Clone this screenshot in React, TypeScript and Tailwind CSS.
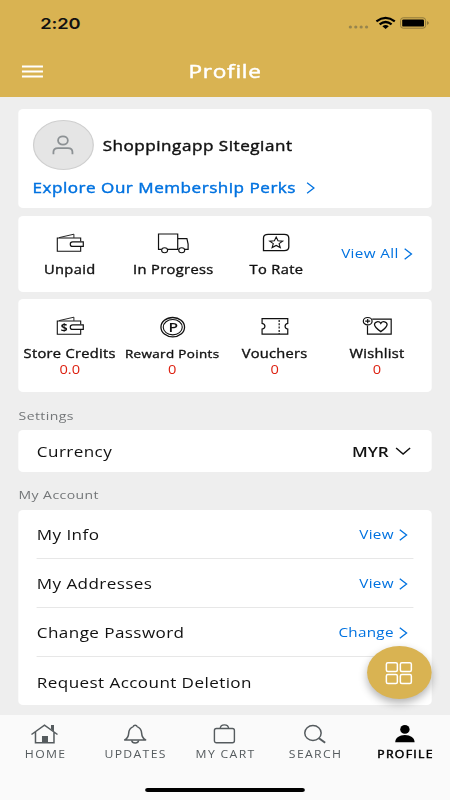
import React from 'react';

// Everything is laid out on a 369px wide canvas and stretched to 450px
const STRETCH = 450 / 369;

interface DrawingProps {
  w: number;
  h: number;
  className?: string;
  children: React.ReactNode;
}

// Icon drawn in final screen units, so it undoes the horizontal stretch
const Drawing = ({ w, h, className = '', children }: DrawingProps) => (
  <svg
    viewBox={`0 0 ${w} ${h}`}
    preserveAspectRatio="none"
    fill="none"
    stroke="currentColor"
    className={`block shrink-0 overflow-visible ${className}`}
    style={{ width: w / STRETCH, height: h }}
  >
    {children}
  </svg>
);

const Chevron = () => (
  <Drawing w={9} h={12}>
    <path d="M1 0.8 7.8 6 1 11.2" strokeWidth="1.3" />
  </Drawing>
);

const Wallet = ({ dollar = false }: { dollar?: boolean }) => (
  <Drawing w={28} h={19}>
    <path d="M24.6 8.3V5H1.2V18.2H24.6V13.5" strokeWidth="1.1" />
    <path d="M3 4.6 17.8 1.2V4.8" strokeWidth="0.9" />
    <path d="M16.5 8.9H27.2V13.4H16.5C13.4 13.4 13.4 8.9 16.5 8.9Z" strokeWidth="1.2" />
    {dollar && (
      <text x="4.6" y="15.2" fontSize="10" fontWeight="700" fill="currentColor" stroke="none" textLength="6.8" lengthAdjust="spacingAndGlyphs">$</text>
    )}
  </Drawing>
);

const Truck = () => (
  <Drawing w={32} h={21}>
    <path d="M4.2 16.3H1.2V1H20.4V16.3H10.4M20.4 5.6H29.6L30.8 11V16.3H27.6M20.4 16.3H21.2" strokeWidth="1.2" />
    <ellipse cx="7.3" cy="17.3" rx="3" ry="2.5" strokeWidth="1.1" />
    <ellipse cx="24.4" cy="17.3" rx="3" ry="2.5" strokeWidth="1.1" />
  </Drawing>
);

const Rate = () => (
  <Drawing w={28} h={19}>
    <path d="M1.3 17.6V5Q1.3 1.4 6 1.4H22Q26.6 1.4 26.6 5V14Q26.6 17.6 22 17.6Z" strokeWidth="1.3" />
    <path d="M14 4 15.8 7.8 20.4 8.1 16.9 10.6 18.1 14.6 14 12.4 9.9 14.6 11.1 10.6 7.6 8.1 12.2 7.8Z" strokeWidth="1.1" />
  </Drawing>
);

const Points = () => (
  <Drawing w={26} h={21}>
    <ellipse cx="13" cy="11.2" rx="11.8" ry="9.7" strokeWidth="1.3" />
    <ellipse cx="13" cy="11.2" rx="9.5" ry="7.7" strokeWidth="1.1" />
    <text x="8.7" y="15.7" fontSize="12.5" fontWeight="600" fill="currentColor" stroke="none" textLength="9.6" lengthAdjust="spacingAndGlyphs">P</text>
  </Drawing>
);

const Voucher = () => (
  <Drawing w={28} h={19}>
    <path d="M1.1 2.6H26.8V7.4C23.2 8.2 23.2 12.2 26.8 13V18.2H1.1V13C4.9 12.2 4.9 8.2 1.1 7.4Z" strokeWidth="1.2" />
    <path d="M18.2 4V18" strokeWidth="1.2" strokeDasharray="2 1.3" />
  </Drawing>
);

const Wishlist = () => (
  <Drawing w={30} h={19}>
    <path d="M10 3.2H29V18.2H5.3V9.5" strokeWidth="1.2" />
    <ellipse cx="5.5" cy="5.2" rx="4.4" ry="3.7" strokeWidth="1.2" />
    <path d="M3 5.2H8M5.5 3.1V7.3" strokeWidth="1.2" />
    <path d="M18.6 15.6C14.5 12.8 12.3 11 12.3 8.6 12.3 5.4 17 4.7 18.6 7.4 20.2 4.7 24.9 5.4 24.9 8.6 24.9 11 22.7 12.8 18.6 15.6Z" strokeWidth="1.3" />
  </Drawing>
);

const orders = [
  { label: 'Unpaid', icon: <Wallet />, width: 'w-[84px]' },
  { label: 'In Progress', icon: <Truck />, width: 'w-[86px]' },
  { label: 'To Rate', icon: <Rate />, width: 'w-[83px]' },
];

const balances = [
  { label: 'Store Credits', value: '0.0', icon: <Wallet dollar />, text: 'text-[12px] tracking-[0.25px]' },
  { label: 'Reward Points', value: '0', icon: <Points />, text: 'text-[11px] tracking-[0.3px]' },
  { label: 'Vouchers', value: '0', icon: <Voucher />, text: 'text-[12px] tracking-[0.22px]' },
  { label: 'Wishlist', value: '0', icon: <Wishlist />, text: 'text-[12px] tracking-[0.25px]' },
];

const accountRows = [
  { label: 'My Info', action: 'View' },
  { label: 'My Addresses', action: 'View' },
  { label: 'Change Password', action: 'Change' },
  { label: 'Request Account Deletion', action: '' },
];

const tabs = [
  {
    label: 'HOME',
    icon: (
      <Drawing w={28} h={20}>
        <path d="M1 10.5 14 1.2 27 10.5M5 8V18.8H23.5V8" strokeWidth="1.5" />
        <path d="M11.5 12H17.5V19H11.5ZM20.5 1H23.5V7.5L20.5 5.3Z" fill="currentColor" stroke="none" />
      </Drawing>
    ),
  },
  {
    label: 'UPDATES',
    icon: (
      <Drawing w={24} h={20}>
        <path d="M1.5 16C4.5 14.4 5.3 12.5 5.5 9.4 5.7 5.8 7.5 3.6 10 2.6 10.7.8 13.3.8 14 2.6 16.5 3.6 18.3 5.8 18.5 9.4 18.7 12.5 19.5 14.4 22.5 16Z" strokeWidth="1.5" strokeLinejoin="round" />
        <path d="M8.5 16.3C9 19.8 15 19.8 15.5 16.3" strokeWidth="1.4" />
      </Drawing>
    ),
  },
  {
    label: 'MY CART',
    icon: (
      <Drawing w={22} h={20}>
        <rect x="1" y="4.5" width="20" height="14.3" rx="2" strokeWidth="1.4" />
        <path d="M6.8 4.5Q7 .9 11 .9T15.2 4.5" strokeWidth="1.4" />
      </Drawing>
    ),
  },
  {
    label: 'SEARCH',
    icon: (
      <Drawing w={23} h={20}>
        <ellipse cx="9.3" cy="9" rx="8.2" ry="7.4" strokeWidth="1.5" />
        <path d="M15 14 21.5 18.8" strokeWidth="2" />
      </Drawing>
    ),
  },
  {
    label: 'PROFILE',
    active: true,
    icon: (
      <Drawing w={22} h={20}>
        <ellipse cx="11" cy="5.4" rx="4.7" ry="4.3" fill="currentColor" stroke="none" />
        <path d="M1.3 18.2C1.3 14 5.5 11 11 11S20.7 14 20.7 18.2Z" fill="currentColor" stroke="none" />
      </Drawing>
    ),
  },
];

const StatusBar = () => (
  <div className="flex h-[46px] items-center justify-between pl-[33px] pr-[16px]">
    <span className="font-[Inter] text-[15px] font-semibold leading-none tracking-[-0.1px] text-[#111]">2:20</span>
    <div className="flex items-center text-black">
      <Drawing w={20} h={12}>
        <g fill="#97854d" stroke="none">
          <circle cx="1.6" cy="10" r="1.6" />
          <circle cx="7" cy="10" r="1.6" />
          <circle cx="12.4" cy="10" r="1.6" />
          <circle cx="17.8" cy="10" r="1.6" />
        </g>
      </Drawing>
      <Drawing w={20} h={12} className="ml-[5.5px]">
        <path d="M0.8 4.3Q10-2.6 19.2 4.3M4 7.3Q10 2.7 16 7.3" strokeWidth="2.3" />
        <path d="M6.8 9.2Q10 7 13.2 9.2L10 11.9Z" fill="currentColor" stroke="none" />
      </Drawing>
      <Drawing w={30} h={12} className="ml-[4.5px]">
        <rect x="0.6" y="0.8" width="25" height="10.4" rx="2.6" stroke="#8f783b" strokeWidth="1" />
        <rect x="2.2" y="2.4" width="21.8" height="7.2" rx="1.2" fill="currentColor" stroke="none" />
        <path d="M27 4.1Q30.8 6 27 8Z" fill="#8f783b" stroke="none" />
      </Drawing>
    </div>
  </div>
);

const App: React.FC = () => {
  return (
    <div className="h-[800px] w-[450px] overflow-hidden bg-[#eeeeee]">
      <div className="relative flex h-[800px] w-[369px] origin-top-left scale-x-[1.21951] flex-col font-['Open_Sans',sans-serif] text-[#111]">
        <header className="h-[97px] shrink-0 bg-[#d9b352]">
          <StatusBar />
          <div className="flex h-[50px] items-center px-[18px] text-white">
            <Drawing w={21} h={13}>
              <path d="M0 1.6H21M0 6.5H21M0 11.4H21" strokeWidth="2" />
            </Drawing>
            <h1 className="flex-1 pr-[17px] text-center text-[18.5px] leading-none tracking-[0.6px] [-webkit-text-stroke:0.45px]">Profile</h1>
          </div>
        </header>

        <main className="flex h-[618px] shrink-0 flex-col overflow-hidden px-[15.2px] pt-[12px]">
          <section className="h-[99px] shrink-0 rounded bg-white pl-[11.5px] pt-[11px]">
            <div className="flex items-center">
              <div className="flex h-[50px] w-[50px] items-center justify-center rounded-full border border-[#cfcfcf] bg-[#e5e5e5] text-[#8c9194]">
                <Drawing w={21} h={20}>
                  <ellipse cx="10.5" cy="5.5" rx="4.9" ry="4.2" strokeWidth="1.8" />
                  <path d="M1 19.2V17Q1 13.2 5.5 13.2H15.5Q20 13.2 20 17V19.2" strokeWidth="1.8" />
                </Drawing>
              </div>
              <span className="ml-[7.5px] text-[14px] tracking-[0.43px] [-webkit-text-stroke:0.4px]">Shoppingapp Sitegiant</span>
            </div>
            <a className="mt-[8px] flex items-center gap-[8.5px] text-[14px] leading-[20px] tracking-[0.42px] text-[#0072e0] [-webkit-text-stroke:0.4px]">
              Explore Our Membership Perks
              <Chevron />
            </a>
          </section>

          <section className="mt-[8px] flex h-[76px] shrink-0 rounded bg-white">
            {orders.map((order) => (
              <div key={order.label} className={`flex flex-col items-center pt-[17px] ${order.width}`}>
                <div className="h-[21px]">{order.icon}</div>
                <span className="mt-[7px] whitespace-nowrap text-[12px] leading-[18px] tracking-[0.3px] [-webkit-text-stroke:0.35px]">{order.label}</span>
              </div>
            ))}
            <a className="flex flex-1 items-center justify-end gap-[4px] pr-[15.5px] text-[12.5px] tracking-[0.3px] text-[#0072e0]">
              View All
              <Chevron />
            </a>
          </section>

          <section className="mt-[7px] grid h-[93px] shrink-0 grid-cols-[84px_84px_84px_84px] rounded bg-white">
            {balances.map((item) => (
              <div key={item.label} className="flex flex-col items-center pt-[17px]">
                <div className="h-[21px]">{item.icon}</div>
                <span className={`mt-[8px] whitespace-nowrap leading-[17px] [-webkit-text-stroke:0.35px] ${item.text}`}>{item.label}</span>
                <span className="text-[12px] leading-[16px] text-[#dd2010]">{item.value}</span>
              </div>
            ))}
          </section>

          <h2 className="mt-[14px] shrink-0 text-[11.5px] leading-[20px] tracking-[0.35px] text-[#737678]">Settings</h2>
          <section className="mt-[4px] flex h-[42px] shrink-0 items-center justify-between rounded bg-white pl-[15px] pr-[17px]">
            <span className="text-[14px] tracking-[0.35px]">Currency</span>
            <div className="flex items-center gap-[5px] text-[14px] font-semibold">
              MYR
              <Drawing w={16} h={8}>
                <path d="M1 1 8 7 15 1" strokeWidth="1.5" />
              </Drawing>
            </div>
          </section>

          <h2 className="mt-[13px] shrink-0 text-[11.5px] leading-[20px] tracking-[0.35px] text-[#737678]">My Account</h2>
          <section className="mt-[5px] h-[195px] shrink-0 divide-y divide-[#e7e7e7] rounded bg-white px-[15px]">
            {accountRows.map((row) => (
              <div key={row.label} className="flex h-[49px] items-center justify-between pr-[4px] pt-px">
                <span className="text-[14px] tracking-[0.34px]">{row.label}</span>
                {row.action && (
                  <a className="flex items-center gap-[4.5px] text-[12.5px] tracking-[0.25px] text-[#0072e0]">
                    <span className="pt-px">{row.action}</span>
                    <Chevron />
                  </a>
                )}
              </div>
            ))}
          </section>
        </main>

        <nav className="h-[85px] shrink-0 bg-[#fafafa]">
          <div className="grid grid-cols-5 pt-[9px]">
            {tabs.map((tab) => (
              <div
                key={tab.label}
                className={`flex flex-col items-center ${tab.active ? 'text-black [-webkit-text-stroke:0.45px]' : 'text-[#555b5e]'}`}
              >
                {tab.icon}
                <span className="mt-[2px] whitespace-nowrap pl-[1px] text-[10px] leading-[17px] tracking-[1.1px]">{tab.label}</span>
              </div>
            ))}
          </div>
          <div className="mx-auto mt-[25px] h-[4px] w-[131px] rounded-full bg-black" />
        </nav>

        <button className="absolute left-[301px] top-[646px] flex h-[53px] w-[53px] items-center justify-center rounded-full bg-[#d9b352] text-white shadow-[0_4px_8px_rgba(0,0,0,0.3)]">
          <Drawing w={27} h={22}>
            <g strokeWidth="1.5">
              <rect x="1" y="0.8" width="11" height="8.8" rx="1.5" />
              <rect x="15" y="0.8" width="11" height="8.8" rx="1.5" />
              <rect x="1" y="12.6" width="11" height="8.8" rx="1.5" />
              <rect x="15" y="12.6" width="11" height="8.8" rx="1.5" />
            </g>
          </Drawing>
        </button>
      </div>
    </div>
  );
};

export default App;
